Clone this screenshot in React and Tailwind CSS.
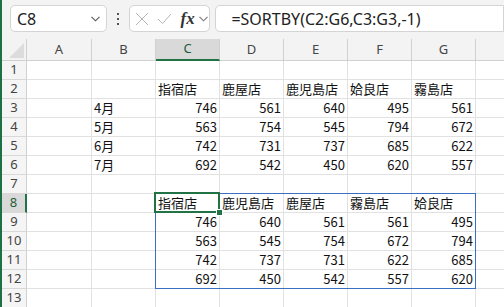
const COLS = ["A", "B", "C", "D", "E", "F", "G"]
const WIDTHS = ["w-[65px]", "w-[64px]", "w-[64px]", "w-[64px]", "w-[64px]", "w-[64px]", "w-[64px]"]

// B..G per row; strings are left aligned text, numbers right aligned
const ROWS = [
  [],
  ["", "指宿店", "鹿屋店", "鹿児島店", "姶良店", "霧島店"],
  ["4月", 746, 561, 640, 495, 561],
  ["5月", 563, 754, 545, 794, 672],
  ["6月", 742, 731, 737, 685, 622],
  ["7月", 692, 542, 450, 620, 557],
  [],
  ["", "指宿店", "鹿児島店", "鹿屋店", "霧島店", "姶良店"],
  ["", 746, 640, 561, 561, 495],
  ["", 563, 545, 754, 672, 794],
  ["", 742, 737, 731, 622, 685],
  ["", 692, 450, 542, 557, 620],
  [],
]

function Chevron({ className }) {
  return (
    <svg width="9" height="6" viewBox="0 0 9 6" className={className}>
      <path d="M0.5 0.8 L4.5 4.8 L8.5 0.8" fill="none" stroke="currentColor" strokeWidth="1.1" />
    </svg>
  )
}

function Toolbar() {
  return (
    <div className="h-[39px] bg-[#f3f3f3] flex items-start pt-[5px] pl-[8px]">
      {/* name box */}
      <div className="w-[101px] h-[27px] bg-white border border-[#d4d4d4] rounded-[5px] flex items-center justify-between pl-[6px] pr-[6px]">
        <span className="font-['Noto_Sans'] text-[16px] text-[#222] leading-none">C8</span>
        <Chevron className="text-[#555]" />
      </div>

      {/* dots */}
      <div className="w-[22px] h-[27px] flex flex-col items-center justify-center gap-[3px]">
        <div className="w-[2px] h-[2px] bg-[#555]" />
        <div className="w-[2px] h-[2px] bg-[#555]" />
        <div className="w-[2px] h-[2px] bg-[#555]" />
      </div>

      {/* cancel / enter / fx */}
      <div className="w-[85px] h-[27px] bg-white border border-[#d4d4d4] rounded-[5px] flex items-center pl-[5px]">
        <svg width="14" height="14" viewBox="0 0 14 14">
          <path d="M1 1 L13 13 M13 1 L1 13" stroke="#b5b5b5" strokeWidth="1" fill="none" />
        </svg>
        <svg width="15" height="12" viewBox="0 0 15 12" className="ml-[8px]">
          <path d="M1 6 L5.5 10.5 L14 1" stroke="#b5b5b5" strokeWidth="1" fill="none" />
        </svg>
        <span className="ml-[9px] font-['Liberation_Serif'] italic font-bold text-[17px] text-[#333] leading-none">fx</span>
        <Chevron className="ml-[4px] text-[#777]" />
      </div>

      {/* formula */}
      <div className="ml-[5px] w-[300px] h-[27px] bg-white border border-[#d4d4d4] rounded-l-[5px] flex items-center pl-[15px]">
        <span className="font-['Noto_Sans'] text-[16px] text-[#222] leading-none">=SORTBY(C2:G6,C3:G3,-1)</span>
      </div>
    </div>
  )
}

function HeaderRow() {
  return (
    <div className="h-[22px] flex bg-[#f3f3f3] font-['Noto_Sans'] text-[13px] text-[#444]">
      <div className="w-[25px] border-r border-b border-[#d0d0d0] relative">
        <svg width="15" height="15" viewBox="0 0 15 15" className="absolute right-[2px] bottom-[2px]">
          <path d="M15 0 L15 15 L0 15 Z" fill="#dcdcdc" />
        </svg>
      </div>
      {COLS.map((c, i) =>
        c === "C" ? (
          <div
            key={c}
            className={`${WIDTHS[i]} border-r border-[#d0d0d0] border-b-2 border-b-[#217346] bg-[#d9d9d9] flex items-center justify-center text-[#1f5c3b]`}
          >
            {c}
          </div>
        ) : (
          <div key={c} className={`${WIDTHS[i]} border-r border-b border-[#d0d0d0] flex items-center justify-center`}>
            {c}
          </div>
        )
      )}
      <div className="flex-1 border-b border-[#d0d0d0]" />
    </div>
  )
}

function Cell({ value, width }) {
  const isNum = typeof value === "number"
  return (
    <div
      className={`${width} h-[19px] border-r border-b border-[#e1e1e1] px-[2px] flex items-center whitespace-nowrap overflow-hidden ${
        isNum ? "justify-end" : "justify-start"
      }`}
    >
      {value}
    </div>
  )
}

function Row({ n, cells }) {
  const selected = n === 8
  return (
    <div className="flex h-[19px]">
      <div
        className={`w-[25px] h-[19px] border-b border-[#d8d8d8] flex items-center justify-center font-['Noto_Sans'] text-[13px] ${
          selected
            ? "bg-[#d9d9d9] border-r-2 border-r-[#217346] text-[#1f5c3b]"
            : "bg-[#f5f5f5] border-r border-r-[#d0d0d0] text-[#444]"
        }`}
      >
        {n}
      </div>
      <Cell value="" width={WIDTHS[0]} />
      {[0, 1, 2, 3, 4, 5].map((i) => (
        <Cell key={i} value={cells[i] ?? ""} width={WIDTHS[i + 1]} />
      ))}
      <div className="flex-1 h-[19px] border-b border-[#e1e1e1]" />
    </div>
  )
}

export default function App() {
  return (
    <div className="w-[504px] h-[307px] overflow-hidden bg-white border-l-2 border-[#1e7145]">
      <Toolbar />
      <HeaderRow />
      <div className="relative font-['Noto_Sans_CJK_JP',sans-serif] text-[13px] text-[#111]">
        {ROWS.map((cells, i) => (
          <Row key={i} n={i + 1} cells={cells} />
        ))}

        {/* spill range C8:G12 */}
        <div className="absolute left-[153px] top-[132px] w-[321px] h-[96px] border border-[#3a6fc4] pointer-events-none" />
        {/* active cell C8 */}
        <div className="absolute left-[152px] top-[131px] w-[66px] h-[21px] border-2 border-[#217346] pointer-events-none" />
        <div className="absolute left-[214px] top-[148px] w-[7px] h-[7px] bg-[#217346] border border-white" />
      </div>
    </div>
  )
}
